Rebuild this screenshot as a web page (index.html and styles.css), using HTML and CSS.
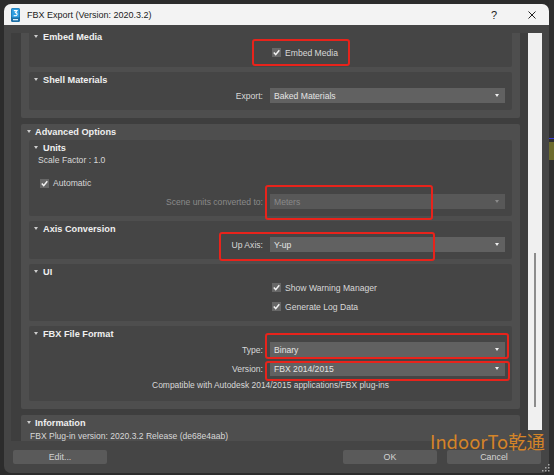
FILE: index.html
```html
<!DOCTYPE html>
<html>
<head>
<meta charset="utf-8">
<title>FBX Export</title>
<link rel="stylesheet" href="styles.css">
</head>
<body>
<div class="bg-app"><div class="bg-blue"></div><div class="bg-olive"></div></div>
<div class="window">
  <div class="titlebar">
    <svg class="app-icon" viewBox="0 0 9 14"><rect x="0" y="0" width="9" height="14" rx="1.5" fill="#1d6fa5"/><rect x="0.6" y="0.6" width="7.8" height="8.8" rx="1" fill="#2f9ee0"/><path d="M2.8 2.6 H6 L4.5 4.6 Q6.3 4.9 6.1 6.5 Q5.8 8.2 2.7 7.6" stroke="#ffffff" stroke-width="1.1" fill="none"/><rect x="2" y="11" width="5" height="1.3" fill="#d6ecfa"/></svg>
    <span class="title">FBX Export (Version: 2020.3.2)</span>
    <span class="help">?</span>
    <svg class="close" viewBox="0 0 8 8"><path d="M0.5 0.5 L7.5 7.5 M7.5 0.5 L0.5 7.5" stroke="#222" stroke-width="1" fill="none"/></svg>
  </div>
  <div class="body">
    <div class="scroll-row">
      <div class="viewport">
        <div class="content">
          <section class="rollout">
            <div class="r-head"><i class="tri"></i>Include</div>
            <div class="subs">
              <div class="sub">
                <div class="r-head"><i class="tri"></i>Embed Media</div>
                <div class="row">
                  <span></span>
                  <label class="cb"><span class="box"><svg viewBox="0 0 9 9"><path d="M1.8 4.6 L3.7 6.6 L7.3 2.2" stroke="#f2f2f2" stroke-width="1.5" fill="none"/></svg></span>Embed Media</label>
                </div>
              </div>
              <div class="sub">
                <div class="r-head"><i class="tri"></i>Shell Materials</div>
                <div class="row">
                  <span class="label">Export:</span>
                  <div class="dd"><span>Baked Materials</span><i class="arrow"></i></div>
                </div>
              </div>
            </div>
          </section>

          <section class="rollout">
            <div class="r-head"><i class="tri"></i>Advanced Options</div>
            <div class="subs">
              <div class="sub">
                <div class="r-head"><i class="tri"></i>Units</div>
                <div class="line">Scale Factor : 1.0</div>
                <label class="auto"><span class="box"><svg viewBox="0 0 9 9"><path d="M1.8 4.6 L3.7 6.6 L7.3 2.2" stroke="#f2f2f2" stroke-width="1.5" fill="none"/></svg></span>Automatic</label>
                <div class="row gap-top">
                  <span class="label dim">Scene units converted to:</span>
                  <div class="dd disabled"><span>Meters</span><i class="arrow"></i></div>
                </div>
              </div>
              <div class="sub">
                <div class="r-head"><i class="tri"></i>Axis Conversion</div>
                <div class="row">
                  <span class="label">Up Axis:</span>
                  <div class="dd"><span>Y-up</span><i class="arrow"></i></div>
                </div>
              </div>
              <div class="sub">
                <div class="r-head"><i class="tri"></i>UI</div>
                <div class="row">
                  <span></span>
                  <label class="cb"><span class="box"><svg viewBox="0 0 9 9"><path d="M1.8 4.6 L3.7 6.6 L7.3 2.2" stroke="#f2f2f2" stroke-width="1.5" fill="none"/></svg></span>Show Warning Manager</label>
                </div>
                <div class="row gap-top">
                  <span></span>
                  <label class="cb"><span class="box"><svg viewBox="0 0 9 9"><path d="M1.8 4.6 L3.7 6.6 L7.3 2.2" stroke="#f2f2f2" stroke-width="1.5" fill="none"/></svg></span>Generate Log Data</label>
                </div>
              </div>
              <div class="sub sub-fbx">
                <div class="r-head"><i class="tri"></i>FBX File Format</div>
                <div class="row">
                  <span class="label">Type:</span>
                  <div class="dd"><span>Binary</span><i class="arrow"></i></div>
                </div>
                <div class="row gap-top">
                  <span class="label">Version:</span>
                  <div class="dd"><span>FBX 2014/2015</span><i class="arrow"></i></div>
                </div>
                <div class="compat">Compatible with Autodesk 2014/2015 applications/FBX plug-ins</div>
              </div>
            </div>
          </section>

          <section class="rollout info">
            <div class="r-head"><i class="tri"></i>Information</div>
            <div class="info-text">FBX Plug-in version: 2020.3.2 Release (de68e4aab)</div>
          </section>
        </div>
      </div>
      <div class="scrollbar"><div class="thumb"></div></div>
    </div>
    <div class="buttons">
      <button class="btn">Edit...</button>
      <span class="spacer"></span>
      <button class="btn">OK</button>
      <button class="btn">Cancel</button>
    </div>
  </div>
</div>

<div class="mark m1"></div>
<div class="mark m2"></div>
<div class="mark m3"></div>
<div class="mark m4"></div>
<div class="mark m5"></div>

<div class="watermark">IndoorTo乾通</div>
<svg class="grip" viewBox="0 0 10 10"><g fill="#a8a8a8"><rect x="7" y="1" width="1.5" height="1.5"/><rect x="4" y="4" width="1.5" height="1.5"/><rect x="7" y="4" width="1.5" height="1.5"/><rect x="1" y="7" width="1.5" height="1.5"/><rect x="4" y="7" width="1.5" height="1.5"/><rect x="7" y="7" width="1.5" height="1.5"/></g></svg>
</body>
</html>
```

FILE: styles.css
```css
* { box-sizing: border-box; }
html, body { margin: 0; padding: 0; }
body {
  width: 554px;
  height: 475px;
  background: #2c2c2c;
  position: relative;
  overflow: hidden;
  font-family: "Liberation Sans", Arial, sans-serif;
  font-size: 8.6px;
  color: #d8d8d8;
}

.bg-app {
  position: absolute;
  left: 549px;
  top: 0;
  width: 5px;
  height: 475px;
  background: #2f2f2f;
}
.bg-blue { margin-top: 138px; height: 1px; background: #3b3bd6; }
.bg-olive { margin-top: 3px; height: 18px; background: #6c6b2c; }

.window {
  margin: 4px 0 0 4px;
  width: 545px;
  height: 469px;
  background: #454545;
  border-radius: 7px;
  overflow: hidden;
  display: flex;
  flex-direction: column;
}

.titlebar {
  height: 21px;
  flex: none;
  background: #f3f3f3;
  display: flex;
  align-items: center;
  padding-left: 7px;
  color: #1b1b1b;
  font-size: 9px;
}
.app-icon { width: 9px; height: 14px; margin-right: 7px; flex: none; }
.title { flex: 1; white-space: nowrap; }
.help { font-size: 11px; margin-right: 31px; color: #222; }
.close { width: 8px; height: 8px; margin-right: 13px; flex: none; }

.body {
  flex: 1;
  padding: 8px 7px 0 7px;
  display: flex;
  flex-direction: column;
}
.scroll-row { display: flex; height: 408px; flex: none; }
.viewport {
  width: 517px;
  height: 408px;
  background: #3e3e3e;
  overflow: hidden;
}
.content {
  margin-top: -20px;
  padding: 0 8px 0 10px;
  display: flex;
  flex-direction: column;
  gap: 6px;
}
.scrollbar {
  width: 14px;
  height: 397px;
  background: #f0f0f0;
  padding-top: 220px;
  display: flex;
  justify-content: center;
}
.thumb { width: 2px; height: 154px; background: #8c8c8c; }

.rollout { background: #4e4e4e; border-radius: 2px; }
.r-head {
  height: 16px;
  line-height: 16px;
  padding-left: 6px;
  font-weight: bold;
  font-size: 9.2px;
  color: #efefef;
  white-space: nowrap;
}
.tri {
  display: inline-block;
  width: 0;
  height: 0;
  border-left: 2.5px solid transparent;
  border-right: 2.5px solid transparent;
  border-top: 3px solid #cdcdcd;
  margin-right: 4px;
  vertical-align: 2px;
}
.subs {
  padding: 0 8px 8px 8px;
  display: flex;
  flex-direction: column;
  gap: 5px;
}
.sub { background: #454545; padding-bottom: 7px; border-radius: 2px; }
.sub > .r-head { padding-left: 5px; }
.sub > .r-head .tri { margin-right: 5px; }

.row {
  display: grid;
  grid-template-columns: 1fr 235px;
  column-gap: 7px;
  padding-right: 7px;
  height: 15px;
  align-items: center;
  white-space: nowrap;
}
.gap-top { margin-top: 4px; }
.label { text-align: right; }
.dim { color: #8a8a8a; }

.dd {
  height: 15px;
  background: #616161;
  display: flex;
  align-items: center;
  justify-content: space-between;
  padding: 0 6px 0 4px;
  color: #e4e4e4;
}
.arrow {
  width: 0;
  height: 0;
  border-left: 2.5px solid transparent;
  border-right: 2.5px solid transparent;
  border-top: 3px solid #eeeeee;
}
.dd.disabled { background: #585858; color: #8a8a8a; }
.dd.disabled .arrow { border-top-color: #8a8a8a; }

.cb {
  display: flex;
  align-items: center;
  gap: 4px;
  margin-left: 2px;
}
.box {
  width: 9px;
  height: 9px;
  background: #676767;
  display: block;
  flex: none;
}
.box svg { width: 9px; height: 9px; display: block; }

.line { height: 9px; line-height: 9px; padding-left: 9px; }
.auto {
  margin-top: 11px;
  height: 14px;
  padding-left: 11px;
  display: flex;
  align-items: center;
  gap: 4px;
}

.compat {
  margin-top: 1px;
  height: 17px;
  line-height: 17px;
  text-align: center;
  white-space: nowrap;
  font-size: 8.45px;
}

.info { height: 40px; }
.info-text { padding-left: 9px; line-height: 10px; white-space: nowrap; font-size: 8.55px; }

.buttons {
  display: flex;
  margin-top: 9px;
  padding: 0 1px 0 2px;
  gap: 10px;
}
.spacer { flex: 1; }
.btn {
  width: 94px;
  height: 14px;
  border: none;
  background: #5a5a5a;
  border-radius: 2px;
  color: #d2d2d2;
  font-family: inherit;
  font-size: 8.9px;
  padding: 0;
  display: flex;
  align-items: center;
  justify-content: center;
}

.mark {
  position: absolute;
  border: 2px solid #e8231b;
  border-radius: 3px;
}
.m1 { left: 252px; top: 39px; width: 98px; height: 27px; }
.m2 { left: 265px; top: 185px; width: 168px; height: 35px; }
.m3 { left: 219px; top: 232px; width: 216px; height: 29px; }
.m4 { left: 265px; top: 333px; width: 244px; height: 26px; }
.m5 { left: 265px; top: 361px; width: 245px; height: 20px; }

.watermark {
  position: absolute;
  left: 430px;
  top: 432px;
  font-family: "Noto Sans CJK SC", "Noto Sans", sans-serif;
  font-size: 18.4px;
  line-height: 1;
  color: #e08a26;
  opacity: 0.92;
  white-space: nowrap;
}
.grip {
  position: absolute;
  left: 541px;
  top: 463px;
  width: 10px;
  height: 10px;
}
```
